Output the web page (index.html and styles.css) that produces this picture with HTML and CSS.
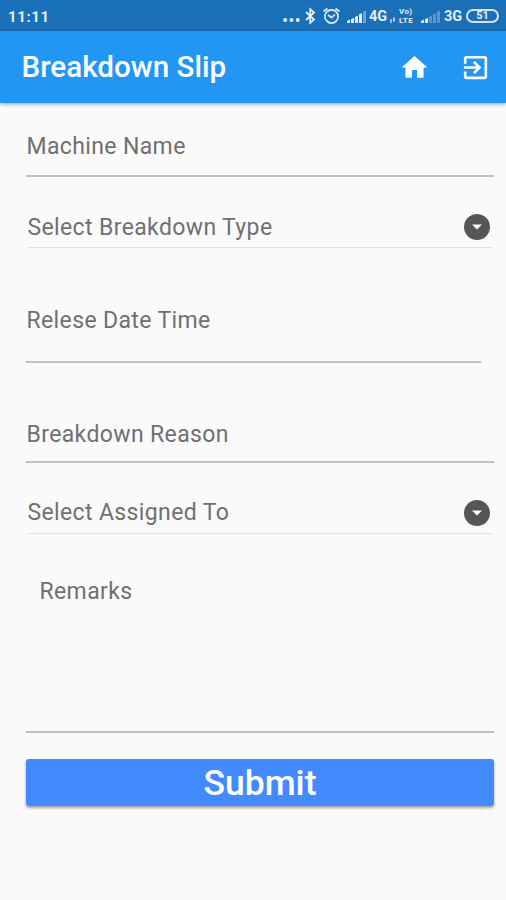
FILE: index.html
```html
<!DOCTYPE html>
<html lang="en">
<head>
<meta charset="utf-8">
<title>Breakdown Slip</title>
<link rel="stylesheet" href="styles.css">
</head>
<body>
<div class="status">
  <span class="clock">11:11</span>
  <svg class="dots" width="17" height="18" viewBox="0 0 17 18" fill="currentColor"><circle cx="2.2" cy="13" r="2"/><circle cx="8.500" cy="13" r="2"/><circle cx="14.800" cy="13" r="2"/></svg>
  <svg class="bluetooth" width="11" height="18" viewBox="0 0 11 18" fill="none" stroke="currentColor" stroke-width="1.8"><path d="M1 5l8 7.500-3.800 3.300V2.300L9 5.500 1 13"/></svg>
  <svg class="alarm" width="19" height="18" viewBox="0 0 19 18" fill="none" stroke="currentColor" stroke-width="1.6"><circle cx="9.500" cy="9.500" r="6.600"/><path d="M1.500 4.500l4-3M17.500 4.500l-4-3M6 8l3.500 2.500 3.500-3"/></svg>
  <svg class="signal" width="19" height="18" viewBox="0 0 19 18" fill="currentColor"><path d="M0 14l3-1.500V16H0zM4 12.200l3-1.500V16H4zM8 10l3-1.500V16H8zM12 7.500L15 6v10h-3z"/><path opacity=".4" d="M16 5l3-1.500V16h-3z"/></svg>
  <span class="net">4G</span>
  <svg class="data" width="5" height="18" viewBox="0 0 5 18" fill="currentColor"><path opacity=".6" d="M0 12h2v4H0z"/><path opacity=".8" d="M3 10.500h2v4H3z"/></svg>
  <span class="volte"><span>Vo)</span><span>LTE</span></span>
  <svg class="signal second" width="19" height="18" viewBox="0 0 19 18" fill="currentColor"><path d="M0 14l3-1.500V16H0zM4 12.200l3-1.500V16H4z"/><path opacity=".32" d="M8 10l3-1.500V16H8zM12 7.500L15 6v10h-3zM16 5l3-1.500V16h-3z"/></svg>
  <span class="net third">3G</span>
  <span class="battery">51</span>
</div>
<header class="appbar">
  <h1>Breakdown Slip</h1>
  <svg class="home" width="31" height="31" viewBox="0 0 24 24" fill="currentColor"><path d="M10 20v-6h4v6h5v-8h3L12 3 2 12h3v8z"/></svg>
  <svg class="exit" width="31" height="31" viewBox="0 0 24 24" fill="none" stroke="currentColor" stroke-width="2"><path d="M4 9V5q0-1 1-1h14q1 0 1 1v14q0 1-1 1H5q-1 0-1-1v-4M3 12h12M10.800 7.700L15.100 12l-4.300 4.300"/></svg>
</header>
<main>
  <div class="field machine"><span>Machine Name</span></div>
  <div class="field select type"><span>Select Breakdown Type</span><svg width="26" height="26" viewBox="0 0 26 26"><circle cx="13" cy="13" r="13" fill="#565656"/><path d="M8 10.500h10l-5 5z" fill="#fafafa"/></svg></div>
  <div class="field release"><span>Relese Date Time</span></div>
  <div class="field reason"><span>Breakdown Reason</span></div>
  <div class="field select assigned"><span>Select Assigned To</span><svg width="26" height="26" viewBox="0 0 26 26"><circle cx="13" cy="13" r="13" fill="#565656"/><path d="M8 10.500h10l-5 5z" fill="#fafafa"/></svg></div>
  <div class="field remarks"><span>Remarks</span></div>
  <button class="submit">Submit</button>
</main>
</body>
</html>
```
FILE: styles.css
```css
* { box-sizing: border-box; }
body { margin: 0; height: 900px; background: #fafafa; font-family: Roboto, sans-serif; overflow: hidden; }
svg { display: block; flex: none; }
.status { height: 31px; background: #1a70b8; color: #e3eefa; display: flex; align-items: center; padding: 1px 7px 0 8px; white-space: nowrap; }
.clock { font-size: 15px; font-weight: 700; letter-spacing: .6px; margin-right: auto; padding-top: 1px; }
.bluetooth { margin-left: 5px; }
.alarm { margin-left: 6px; }
.signal { margin-left: 6px; }
.net { font-size: 14.500px; font-weight: 700; width: 19px; margin-left: 3px; }
.data { margin-left: 2px; }
.volte { width: 17px; margin-left: 4px; font-size: 8px; line-height: 9px; font-weight: 700; letter-spacing: .4px; }
.volte span { display: block; }
.signal.second { margin-left: 5px; }
.third { margin-left: 4px; }
.battery { width: 33px; height: 14px; margin-left: 3px; border: 2px solid #d4e4f4; border-radius: 7px; font-size: 11px; line-height: 10px; font-weight: 700; text-align: center; }
.appbar { height: 72px; background: #2196f3; color: #fff; display: flex; align-items: center; padding: 0 15px 0 21.500px; box-shadow: 0 1px 4px rgba(0,0,0,.4); }
.appbar h1 { margin: 0 auto 0 0; font-size: 29.600px; font-weight: 500; line-height: 40px; white-space: nowrap; }
.exit { margin-left: 30.500px; }
main { padding: 0 12px 0 26px; }
.field { display: flex; align-items: flex-end; justify-content: space-between; border-bottom: 2px solid #c1c1c1; color: #707070; font-size: 23px; line-height: 26px; letter-spacing: .37px; white-space: nowrap; }
.field span { padding-left: .5px; }
.machine { height: 74px; padding-bottom: 15px; }
.select { margin: 0 2px 0 1px; border-bottom: 1px solid #e4e4e4; padding-right: 2px; align-items: center; }
.select span { padding-top: 1px; }
.type { height: 71px; padding-top: 30px; }
.release { height: 115px; padding-bottom: 27px; margin-right: 13px; }
.reason { height: 100px; padding-bottom: 13px; }
.assigned { height: 71px; padding-top: 29px; }
.remarks { height: 199px; align-items: flex-start; padding: 45px 0 0 13px; }
.submit { display: block; width: 100%; height: 47px; margin-top: 26px; padding: 0; border: 0; border-radius: 3px; background: #448aff; color: #fff; font: 500 35.500px/48px Roboto, sans-serif; box-shadow: 0 2px 3px rgba(0,0,0,.35); }
```
